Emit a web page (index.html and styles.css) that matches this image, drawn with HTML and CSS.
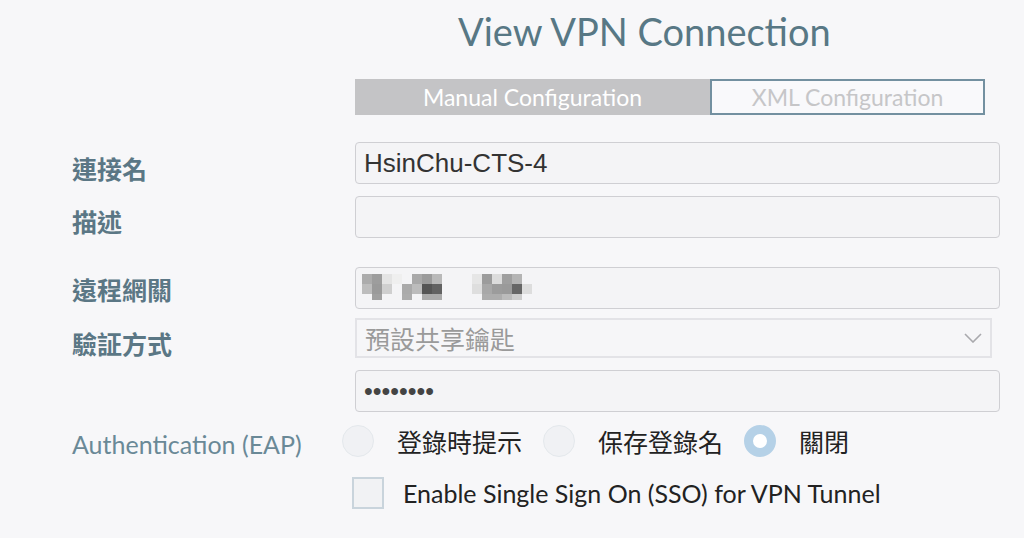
FILE: index.html
```html
<!DOCTYPE html>
<html>

<head>
    <meta charset="UTF-8" />
    <meta name="viewport" content="width=device-width, initial-scale=1">
    <title>View VPN Connection</title>
    <link rel="stylesheet" href="styles.css">
</head>

<body>
    <h1 class="title">View VPN Connection</h1>

    <div class="tabs">
        <div class="tab tab-active">Manual Configuration</div>
        <div class="tab tab-idle">XML Configuration</div>
    </div>

    <div class="form">
        <div class="row row-name">
            <label class="label">連接名</label>
            <div class="field">HsinChu-CTS-4</div>
        </div>
        <div class="row row-desc">
            <label class="label">描述</label>
            <div class="field"></div>
        </div>
        <div class="row row-gateway">
            <label class="label">遠程網關</label>
            <div class="field">
                <svg class="masked" width="180" height="30" viewBox="0 0 180 30">
                    <rect x="0" y="0" width="10" height="10" fill="#acacac" />
                    <rect x="10" y="0" width="10" height="10" fill="#9d9d9d" />
                    <rect x="20" y="0" width="10" height="10" fill="#e4e4e4" />
                    <rect x="30" y="0" width="10" height="10" fill="#efefef" />
                    <rect x="50" y="0" width="10" height="10" fill="#a9a9a9" />
                    <rect x="60" y="0" width="10" height="10" fill="#9b9b9b" />
                    <rect x="70" y="0" width="10" height="10" fill="#b9b9b9" />
                    <rect x="110" y="0" width="10" height="10" fill="#e6e6e6" />
                    <rect x="120" y="0" width="10" height="10" fill="#9c9c9c" />
                    <rect x="130" y="0" width="10" height="10" fill="#dcdcdc" />
                    <rect x="140" y="0" width="10" height="10" fill="#9f9f9f" />
                    <rect x="150" y="0" width="10" height="10" fill="#b4b4b4" />
                    <rect x="0" y="10" width="10" height="10" fill="#bdbdbd" />
                    <rect x="10" y="10" width="10" height="10" fill="#9a9a9a" />
                    <rect x="20" y="10" width="10" height="10" fill="#cfcfcf" />
                    <rect x="40" y="10" width="10" height="10" fill="#aaaaaa" />
                    <rect x="50" y="10" width="10" height="10" fill="#bcbcbc" />
                    <rect x="60" y="10" width="10" height="10" fill="#555555" />
                    <rect x="70" y="10" width="10" height="10" fill="#626262" />
                    <rect x="110" y="10" width="10" height="10" fill="#dedede" />
                    <rect x="120" y="10" width="10" height="10" fill="#a8a8a8" />
                    <rect x="130" y="10" width="10" height="10" fill="#9c9c9c" />
                    <rect x="140" y="10" width="10" height="10" fill="#9a9a9a" />
                    <rect x="150" y="10" width="10" height="10" fill="#666666" />
                    <rect x="160" y="10" width="10" height="10" fill="#dddddd" />
                    <rect x="10" y="20" width="10" height="6" fill="#a0a0a0" />
                    <rect x="40" y="20" width="10" height="6" fill="#acacac" />
                    <rect x="60" y="20" width="20" height="6" fill="#aaaaaa" />
                    <rect x="120" y="20" width="20" height="6" fill="#adadad" />
                    <rect x="140" y="20" width="10" height="6" fill="#bbbbbb" />
                    <rect x="150" y="20" width="10" height="6" fill="#cccccc" />
                </svg>
            </div>
        </div>
        <div class="row row-method">
            <label class="label">驗証方式</label>
            <div class="select">
                <span>預設共享鑰匙</span>
                <svg class="chevron" width="18" height="10" viewBox="0 0 18 10">
                    <path d="M1 1 L9 9 L17 1" fill="none" stroke="#a9a9ad" stroke-width="1.6" />
                </svg>
            </div>
        </div>
        <div class="row row-secret">
            <span></span>
            <div class="field dots">••••••••</div>
        </div>
        <div class="row row-eap">
            <label class="label label-light">Authentication (EAP)</label>
            <div class="options">
                <span class="radio"></span>
                <span class="option-text">登錄時提示</span>
                <span class="radio"></span>
                <span class="option-text">保存登錄名</span>
                <span class="radio radio-on"></span>
                <span class="option-text">關閉</span>
            </div>
        </div>
        <div class="row row-sso">
            <span></span>
            <div class="check-line">
                <span class="checkbox"></span>
                <span class="check-text">Enable Single Sign On (SSO) for VPN Tunnel</span>
            </div>
        </div>
    </div>
</body>

</html>
```

FILE: styles.css
```css
body {
    margin: 0;
    background-color: #f7f7f9;
    font-family: "Lato", "Noto Sans CJK TC", sans-serif;
    color: #222222;
}

.title {
    margin: 0;
    padding: 10px 0 0 458px;
    font-size: 38px;
    font-weight: normal;
    line-height: 42px;
    color: #587885;
}

.tabs {
    display: flex;
    margin: 27px 0 0 355px;
    width: 630px;
    height: 36px;
}

.tab {
    display: flex;
    align-items: center;
    justify-content: center;
    font-size: 23px;
    box-sizing: border-box;
}

.tab-active {
    width: 355px;
    background-color: #c4c4c6;
    color: #ffffff;
}

.tab-idle {
    width: 275px;
    border: 2px solid #7390a0;
    background-color: #f9f9fb;
    color: #c6c6c8;
}

.form {
    display: grid;
    grid-template-columns: 283px 645px;
    padding-left: 72px;
}

.row {
    display: contents;
}

.label {
    display: flex;
    align-items: center;
    box-sizing: border-box;
    height: 42px;
    padding-top: 11px;
    font-family: "Noto Sans CJK TC", sans-serif;
    font-weight: bold;
    font-size: 25px;
    line-height: 1;
    color: #5b7785;
}

.label-light {
    height: 32px;
    padding-top: 6px;
    font-family: "Lato", sans-serif;
    font-weight: normal;
    color: #6a8997;
}

.field {
    display: flex;
    align-items: center;
    box-sizing: border-box;
    height: 42px;
    padding: 0 8px;
    border: 1px solid #cfcfd3;
    border-radius: 4px;
    background-color: #f4f4f6;
    font-family: "Liberation Sans", Arial, sans-serif;
    font-size: 26px;
    color: #333333;
}

.row-name .field,
.row-name .label {
    margin-top: 27px;
}

.row-desc .field,
.row-desc .label {
    margin-top: 12px;
}

.row-desc .label {
    padding-top: 9px;
}

.row-gateway .field,
.row-gateway .label {
    margin-top: 29px;
}

.row-gateway .label {
    padding-top: 3px;
}

.masked {
    margin-top: 2px;
    margin-left: -2px;
}

.select {
    display: flex;
    align-items: center;
    justify-content: space-between;
    box-sizing: border-box;
    width: 637px;
    height: 40px;
    margin-top: 9px;
    padding: 0 8px 0 8px;
    border: 2px solid #e3e3e7;
    background-color: #f6f6f8;
    font-family: "Noto Sans CJK TC", sans-serif;
    font-size: 25px;
    line-height: 1;
    color: #9a9a9a;
}

.row-method .label {
    height: 40px;
    margin-top: 9px;
    padding-top: 11px;
}

.row-secret .field {
    margin-top: 12px;
}

.dots {
    font-size: 25px;
    color: #444444;
}

.options {
    display: flex;
    align-items: center;
    height: 32px;
    margin: 13px 0 0 -13px;
}

.row-eap .label {
    margin-top: 13px;
}

.radio {
    box-sizing: border-box;
    width: 32px;
    height: 32px;
    border-radius: 50%;
    border: 1px solid #e4e8ec;
    background-color: #f0f1f4;
}

.radio-on {
    border: 9px solid #b5d1e7;
    background-color: #ffffff;
}

.option-text {
    margin: 0 21px 0 23px;
    font-family: "Noto Sans CJK TC", sans-serif;
    font-size: 25px;
    line-height: 1;
    color: #222222;
}

.check-line {
    display: flex;
    align-items: center;
    margin: 20px 0 0 -3px;
}

.checkbox {
    box-sizing: border-box;
    width: 32px;
    height: 32px;
    border: 2px solid #c9d4dc;
    background-color: #f1f2f4;
}

.check-text {
    margin-left: 19px;
    font-size: 25px;
    color: #222222;
}
```
